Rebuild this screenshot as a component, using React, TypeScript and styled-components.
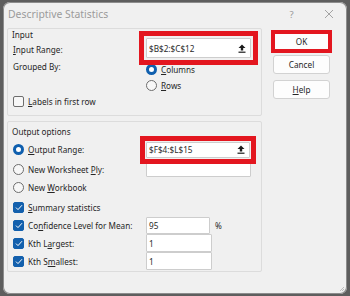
import React from 'react'
import styled, { createGlobalStyle } from 'styled-components'

const GlobalStyle = createGlobalStyle`
  html, body {
    margin: 0;
    padding: 0;
    width: 350px;
    height: 296px;
    overflow: hidden;
    background: #5e5e5e;
  }
  body {
    font-family: "Noto Sans", "Open Sans", sans-serif;
    font-size: 8.2px;
    color: #262626;
  }
`

const Screen = styled.div`
  width: 350px;
  height: 296px;
  padding: 2px 3px 2px 3px;
  box-sizing: border-box;
`

const Dialog = styled.div`
  position: relative;
  width: 344px;
  height: 292px;
  background: #f0f0f0;
  border-radius: 7px;
  box-shadow: inset 0 0 0 1px #8d8d8d;
  overflow: hidden;
`

const TitleBar = styled.div`
  height: 24px;
  display: flex;
  align-items: center;
  padding-left: 5px;
  color: #9b9b9b;
  font-size: 10.4px;
`

const Title = styled.span`
  flex: 1;
`

const TitleButton = styled.span`
  width: 37px;
  display: flex;
  justify-content: center;
  color: #9a9a9a;
  font-size: 9.5px;
`

const Body = styled.div`
  display: flex;
  padding-left: 4px;
  padding-top: 2px;
`

const LeftColumn = styled.div`
  width: 255px;
  display: flex;
  flex-direction: column;
  gap: 5px;
`

const Group = styled.div<{ $h: number }>`
  height: ${p => p.$h}px;
  box-sizing: border-box;
  border: 1px solid #dcdcdc;
  border-radius: 2px;
  padding: 0 0 0 5px;
  display: flex;
  flex-direction: column;
`

const GroupTitle = styled.div<{ $top: number }>`
  line-height: 12px;
  margin-top: ${p => p.$top}px;
  margin-left: -1px;
`

const Row = styled.div<{ $h?: number; $mt?: number; $top?: boolean }>`
  display: grid;
  grid-template-columns: 133px 1fr;
  justify-items: start;
  align-items: ${p => (p.$top ? 'start' : 'center')};
  height: ${p => p.$h ?? 18}px;
  margin-top: ${p => p.$mt ?? 0}px;
`

const Label = styled.span<{ $shift?: number }>`
  position: relative;
  top: ${p => p.$shift ?? 0}px;
  white-space: nowrap;
`

const Key = styled.span`
  text-decoration: underline;
  text-underline-offset: 1px;
`

const Highlight = styled.div<{ $inset: number; $w: number }>`
  position: relative;
  &::after {
    content: '';
    position: absolute;
    inset: -${p => p.$inset}px;
    border: ${p => p.$w}px solid #e3161f;
    pointer-events: none;
  }
`

const TextBox = styled.div<{ $w: number; $h: number }>`
  width: ${p => p.$w}px;
  height: ${p => p.$h}px;
  box-sizing: border-box;
  background: #ffffff;
  border: 1px solid #cdcdcd;
  border-radius: 1px;
  display: flex;
  align-items: center;
  padding-left: 2px;
  color: #2a2a2a;
`

const BoxText = styled.span`
  flex: 1;
`

const PickButton = styled.span`
  width: 16px;
  display: flex;
  justify-content: center;
`

const RadioStack = styled.div`
  display: flex;
  flex-direction: column;
`

const Option = styled.label<{ $h?: number }>`
  display: flex;
  align-items: center;
  gap: 4px;
  height: ${p => p.$h ?? 16}px;
  white-space: nowrap;
`

const RadioDot = styled.span<{ $on?: boolean }>`
  width: 11px;
  height: 11px;
  box-sizing: border-box;
  border-radius: 50%;
  flex: none;
  background: ${p => (p.$on ? '#ffffff' : '#f7f7f7')};
  border: ${p => (p.$on ? '3.5px solid #0f5fae' : '1px solid #6d6d6d')};
`

const CheckBox = styled.span<{ $on?: boolean }>`
  width: 11px;
  height: 11px;
  box-sizing: border-box;
  border-radius: 2px;
  flex: none;
  display: flex;
  align-items: center;
  justify-content: center;
  background: ${p => (p.$on ? '#1360ad' : '#f7f7f7')};
  border: 1px solid ${p => (p.$on ? '#1360ad' : '#6d6d6d')};
`

const Percent = styled.span`
  margin-left: 5px;
`

const InlineField = styled.div`
  display: flex;
  align-items: center;
`

const ButtonColumn = styled.div`
  display: flex;
  flex-direction: column;
  margin-left: 11px;
  padding-top: 4px;
  width: 57px;
`

const Button = styled.div<{ $mt?: number }>`
  height: 19px;
  margin-top: ${p => p.$mt ?? 0}px;
  box-sizing: border-box;
  background: #fdfdfd;
  border: 1px solid #d2d2d2;
  border-radius: 3px;
  display: flex;
  align-items: center;
  justify-content: center;
`

const Grip = styled.svg`
  position: absolute;
  right: 2px;
  bottom: 2px;
`

const UploadIcon = () => (
  <svg width="8" height="9" viewBox="0 0 8 9">
    <path d="M4 0.5 L7.5 4 H5.2 V6.6 H2.8 V4 H0.5 Z" fill="#1b1b1b" />
    <rect x="0.5" y="7.6" width="7" height="1.2" fill="#1b1b1b" />
  </svg>
)

const Tick = () => (
  <svg width="8" height="7" viewBox="0 0 8 7">
    <path d="M1 3.6 L3 5.6 L7 1.2" stroke="#ffffff" strokeWidth="1" fill="none" />
  </svg>
)

export default function App() {
  return (
    <Screen>
      <GlobalStyle />
      <Dialog>
        <TitleBar>
          <Title>Descriptive Statistics</Title>
          <TitleButton>?</TitleButton>
          <TitleButton>
            <svg width="10" height="10" viewBox="0 0 10 10">
              <path d="M1 1 L9 9 M9 1 L1 9" stroke="#9a9a9a" strokeWidth="0.9" />
            </svg>
          </TitleButton>
        </TitleBar>
        <Body>
          <LeftColumn>
            <Group $h={88}>
              <GroupTitle $top={0}>Input</GroupTitle>
              <Row $h={20} $mt={-3}>
                <Label $shift={1}>
                  <Key>I</Key>nput Range:
                </Label>
                <Highlight $inset={7} $w={5}>
                  <TextBox $w={105} $h={20}>
                    <BoxText>$B$2:$C$12</BoxText>
                    <PickButton>
                      <UploadIcon />
                    </PickButton>
                  </TextBox>
                </Highlight>
              </Row>
              <Row $h={32} $mt={3} $top>
                <Label $shift={0}>Grouped By:</Label>
                <RadioStack>
                  <Option>
                    <RadioDot $on />
                    <span>
                      <Key>C</Key>olumns
                    </span>
                  </Option>
                  <Option>
                    <RadioDot />
                    <span>
                      <Key>R</Key>ows
                    </span>
                  </Option>
                </RadioStack>
              </Row>
              <Option>
                <CheckBox />
                <span>
                  <Key>L</Key>abels in first row
                </span>
              </Option>
            </Group>
            <Group $h={151}>
              <GroupTitle $top={4}>Output options</GroupTitle>
              <Row $mt={2} $h={19}>
                <Option>
                  <RadioDot $on />
                  <span>
                    <Key>O</Key>utput Range:
                  </span>
                </Option>
                <Highlight $inset={6} $w={5}>
                  <TextBox $w={104} $h={16}>
                    <BoxText>$F$4:$L$15</BoxText>
                    <PickButton>
                      <UploadIcon />
                    </PickButton>
                  </TextBox>
                </Highlight>
              </Row>
              <Row $mt={1}>
                <Option>
                  <RadioDot />
                  <span>
                    New Worksheet <Key>P</Key>ly:
                  </span>
                </Option>
                <TextBox $w={105} $h={16} />
              </Row>
              <Row>
                <Option>
                  <RadioDot />
                  <span>
                    New <Key>W</Key>orkbook
                  </span>
                </Option>
              </Row>
              <Row $mt={2}>
                <Option>
                  <CheckBox $on>
                    <Tick />
                  </CheckBox>
                  <span>
                    <Key>S</Key>ummary statistics
                  </span>
                </Option>
              </Row>
              <Row>
                <Option>
                  <CheckBox $on>
                    <Tick />
                  </CheckBox>
                  <span>
                    Co<Key>n</Key>fidence Level for Mean:
                  </span>
                </Option>
                <InlineField>
                  <TextBox $w={64} $h={17}>
                    <BoxText>95</BoxText>
                  </TextBox>
                  <Percent>%</Percent>
                </InlineField>
              </Row>
              <Row>
                <Option>
                  <CheckBox $on>
                    <Tick />
                  </CheckBox>
                  <span>
                    Kth L<Key>a</Key>rgest:
                  </span>
                </Option>
                <TextBox $w={66} $h={18}>
                  <BoxText>1</BoxText>
                </TextBox>
              </Row>
              <Row>
                <Option>
                  <CheckBox $on>
                    <Tick />
                  </CheckBox>
                  <span>
                    Kth S<Key>m</Key>allest:
                  </span>
                </Option>
                <TextBox $w={66} $h={18}>
                  <BoxText>1</BoxText>
                </TextBox>
              </Row>
            </Group>
          </LeftColumn>
          <ButtonColumn>
            <Highlight $inset={2} $w={4}>
              <Button>OK</Button>
            </Highlight>
            <Button $mt={4}>Cancel</Button>
            <Button $mt={6}>
              <span>
                <Key>H</Key>elp
              </span>
            </Button>
          </ButtonColumn>
        </Body>
        <Grip width="6" height="6" viewBox="0 0 6 6">
          <path d="M5 1 L1 5 M5 3 L3 5" stroke="#b0b0b0" strokeWidth="0.8" />
        </Grip>
      </Dialog>
    </Screen>
  )
}
